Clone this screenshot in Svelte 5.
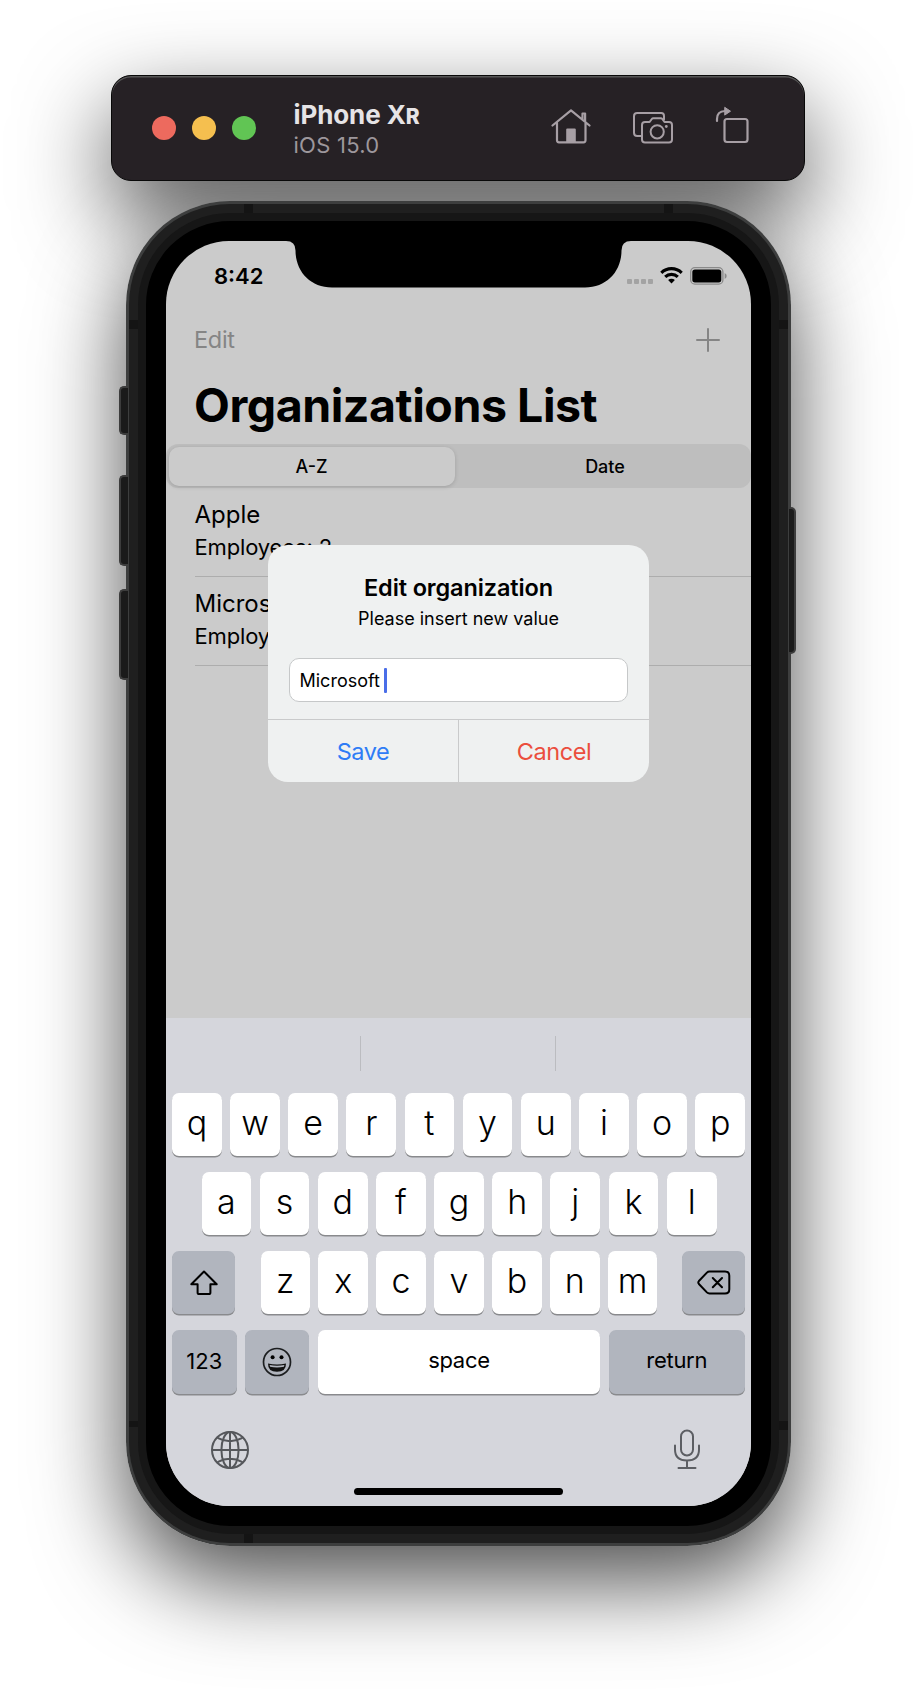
<script>
  const row1 = 'qwertyuiop'.split('');
  const row2 = 'asdfghjkl'.split('');
  const row3 = 'zxcvbnm'.split('');
  const orgs = [
    { name: 'Apple', count: 2 },
    { name: 'Microsoft', count: 3 }
  ];
</script>

<div class="stage">
  <header class="toolbar">
    <div class="lights"><i class="red"></i><i class="yellow"></i><i class="green"></i></div>
    <div class="names">
      <strong>iPhone X<small>R</small></strong>
      <span>iOS 15.0</span>
    </div>
    <div class="tools">
      <svg class="home" width="40" height="38" viewBox="0 0 40 38" fill="none" stroke="#a79fa5" stroke-width="2.2" stroke-linejoin="round" stroke-linecap="round">
        <path d="M1.500 17.500 20 2.300l18.500 15.200M6 15v17.300q0 2 2 2h24.500q2 0 2-2V15M31.500 11V5.500h2.600v8.500" />
        <path d="M16.300 34V21.500h7.400V34z" fill="#a79fa5" />
      </svg>
      <svg class="camera" width="40" height="32" viewBox="0 0 40 32" fill="none" stroke="#a79fa5" stroke-width="2" stroke-linejoin="round" stroke-linecap="round">
        <path d="M8 24H4.200Q1 24 1 20.800V4.200Q1 1 4.200 1h24Q31 1 31 4v3.500" />
        <path d="M12 10h4.600l2.200-3q.5-.7 1.500-.7h7.500q1 0 1.500.7l2.200 3H36q3 0 3 3v14.500q0 3-3 3H12q-3 0-3-3V13q0-3 3-3z" />
        <circle cx="24.200" cy="19.800" r="6.600" />
        <circle cx="33.300" cy="14.500" r="1.400" fill="#a79fa5" stroke="none" />
      </svg>
      <svg class="rotate" width="34" height="38" viewBox="0 0 34 38" fill="none" stroke="#a79fa5" stroke-width="2.200" stroke-linejoin="round" stroke-linecap="round">
        <rect x="9.500" y="13" width="23" height="23" rx="2.500" />
        <path d="M2 15v-2Q2 5.200 10 5" />
        <path d="M10 1.500 15.500 5.200 10 8.900z" fill="#a79fa5" stroke-width="1" />
      </svg>
    </div>
  </header>

  <div class="device">
    <i class="btn mute"></i><i class="btn up"></i><i class="btn down"></i><i class="btn power"></i>
    <i class="band b1"></i><i class="band b2"></i><i class="band b3"></i><i class="band b4"></i>
    <i class="band b5"></i><i class="band b6"></i><i class="band b7"></i>
    <div class="rim"><div class="bezel"><div class="screen">
      <svg class="notch" width="345" height="47" viewBox="0 0 345 47">
        <path d="M0 0Q9.500 0 9.500 9.500C9.500 30 24 46.500 46 46.500H299C321 46.500 335.500 30 335.500 9.500Q335.500 0 345 0z" fill="#000" />
      </svg>
      <div class="app">
        <div class="status">
          <b>8:42</b>
          <div class="signals">
            <div class="cells"><i></i><i></i><i></i><i></i></div>
            <svg width="23" height="17" viewBox="0 0 23 17" fill="none" stroke="#000" stroke-width="3.100">
              <path d="M1.300 5.800a14.600 14.600 0 0 1 20.400 0M5.200 9.900a9 9 0 0 1 12.600 0" />
              <path d="M11.500 16.500 8.100 13.100a4.900 4.900 0 0 1 6.800 0z" fill="#000" stroke="none" />
            </svg>
            <svg width="37" height="18" viewBox="0 0 37 18">
              <rect x=".7" y=".7" width="32.200" height="16.400" rx="4.200" fill="none" stroke="#8a8a8a" stroke-width="1.300" />
              <rect x="2.300" y="2.400" width="29" height="13" rx="2.600" />
              <path d="M34.700 6v6q2-.8 2-3t-2-3z" fill="#8a8a8a" />
            </svg>
          </div>
        </div>
        <nav>
          <span>Edit</span>
          <svg width="24" height="24" viewBox="0 0 24 24" stroke="#858585" stroke-width="2" stroke-linecap="round"><path d="M12 1v22M1 12h22" /></svg>
        </nav>
        <h1>Organizations List</h1>
        <div class="segments"><span class="on">A-Z</span><span class="off">Date</span></div>
        <ul>
          {#each orgs as org}
            <li><b>{org.name}</b><span>Employees: {org.count}</span></li>
          {/each}
        </ul>
      </div>

      <div class="keyboard">
        <div class="suggest"><i></i><i></i><i></i></div>
        <div class="row">{#each row1 as k}<span class="key">{k}</span>{/each}</div>
        <div class="row inset">{#each row2 as k}<span class="key">{k}</span>{/each}</div>
        <div class="row third">
          <span class="key dark side">
            <svg width="28" height="26" viewBox="0 0 28 26" fill="none" stroke="#000" stroke-width="2" stroke-linejoin="round"><path d="M14 1.500 26.700 14.300H20.400V22.500q0 1.600-1.600 1.600H9.200q-1.600 0-1.600-1.600V14.300H1.300z" /></svg>
          </span>
          <div class="mid">{#each row3 as k}<span class="key">{k}</span>{/each}</div>
          <span class="key dark side">
            <svg width="34" height="26" viewBox="0 0 34 26" fill="none" stroke="#000" stroke-width="2" stroke-linejoin="round" stroke-linecap="round"><path d="M12.500 1.500H28q4.300 0 4.300 4.300v13.400q0 4.300-4.300 4.300H12.500q-1.500 0-2.600-1.100L1.900 14q-1.200-1.500 0-3L9.900 2.600q1.100-1.100 2.600-1.100zM15.800 8l9.200 9.200M25 8l-9.200 9.200" /></svg>
          </span>
        </div>
        <div class="row fourth">
          <span class="key dark num">123</span>
          <span class="key dark emoji">
            <svg width="30" height="30" viewBox="0 0 30 30"><circle cx="15" cy="15" r="13.500" fill="none" stroke="#1c1e20" stroke-width="1.700" /><circle cx="10.600" cy="10.300" r="2" /><circle cx="19.500" cy="10.300" r="2" /><path d="M6 16.500q9 2.200 18 0 .2 8.300-9 8.300t-9-8.300z" fill="#111" /><path d="M7.600 18q7.400 1.600 14.800 0l-.5 1.700q-6.900 1.400-13.800 0z" fill="#b2b6bf" /></svg>
          </span>
          <span class="key word space">space</span>
          <span class="key dark word return">return</span>
        </div>
        <div class="foot">
          <svg width="38" height="38" viewBox="0 0 38 38" fill="none" stroke="#55575b" stroke-width="2">
            <circle cx="19" cy="19" r="18" /><ellipse cx="19" cy="19" rx="8.600" ry="18" /><path d="M19 1v36M1 19h36M6.500 6.800Q19 13.500 31.500 6.800M6.500 31.200Q19 24.500 31.500 31.200" />
          </svg>
          <svg class="mic" width="28" height="41" viewBox="0 0 28 41" fill="none" stroke="#5c5e63" stroke-width="2" stroke-linecap="round">
            <rect x="8" y="1.500" width="12" height="25" rx="6" /><path d="M2 16.500v4Q2 31.500 14 31.500T26 20.500v-4M14 31.500V39M5.500 39h17" />
          </svg>
        </div>
        <div class="homebar"></div>
      </div>

      <section class="alert">
        <div class="alert-body">
          <h2>Edit organization</h2>
          <p>Please insert new value</p>
          <div class="field"><span>Microsoft</span><i></i></div>
        </div>
        <div class="actions"><span class="save">Save</span><span class="cancel">Cancel</span></div>
      </section>
    </div></div></div>
  </div>
</div>

<style>
  :global(body) { background: #fff; }
  .stage {
    isolation: isolate;
    width: 916px; height: 1696px; box-sizing: border-box; padding-top: 75px; overflow: hidden;
    font-family: Inter, "Liberation Sans", sans-serif; color: #000; background: #fff;
  }
  .toolbar {
    box-sizing: border-box; width: 694px; height: 106px; margin-left: 111px; padding: 0 55px 0 40px;
    display: flex; align-items: center; background: #262125; border: 1px solid #080808; border-radius: 20px;
    box-shadow: inset 0 1.500px 0 #565656, 0 35px 90px rgba(0,0,0,.68);
  }
  .lights { display: flex; gap: 16px; }
  .lights i { width: 24px; height: 24px; border-radius: 50%; }
  .red { background: #ed6a5e; }
  .yellow { background: #f5bf4f; }
  .green { background: #61c554; }
  .names { margin-left: 37.500px; padding-top: 2px; display: flex; flex-direction: column; }
  .names strong { font-size: 26px; line-height: 30px; font-weight: 750; color: #e6e4e6; letter-spacing: -.1px; }
  .names small { font-size: 21px; font-weight: 800; }
  .names span { font-size: 22px; line-height: 27px; color: #9d979c; letter-spacing: .25px; }
  .tools { margin-left: auto; display: flex; align-items: center; }
  .home { margin-top: -2px; }
  .camera { margin-left: 42px; margin-top: -1px; }
  .rotate { margin-left: 42px; margin-top: -6px; }

  .device {
    position: relative; box-sizing: border-box; width: 665px; height: 1345px; margin: 20px 0 0 126px; padding: 3px;
    border-radius: 104px; background: #3d3e3e;
  }
  .device::before {
    content: ""; position: absolute; inset: 0; z-index: -1; border-radius: 104px;
    box-shadow: 0 35px 90px rgba(0,0,0,.7);
  }
  .rim { box-sizing: border-box; height: 100%; padding: 9px; background: #1f1f1f; border-radius: 101px; }
  .bezel { box-sizing: border-box; height: 100%; border: 8px solid #161616; background: #000; border-radius: 92px; padding: 20px; }
  .screen {
    position: relative; box-sizing: border-box; width: 585px; height: 1265px; background: #cbcbcb; border-radius: 63px;
    overflow: hidden; display: flex; flex-direction: column;
  }
  .btn { position: absolute; left: -7px; width: 9px; background: #1a1a1a; border: 2px solid #3c3c3c; border-right: 0; border-radius: 5px 0 0 5px; box-sizing: border-box; }
  .mute { top: 185px; height: 49px; }
  .up { top: 274px; height: 91px; }
  .down { top: 388px; height: 91px; }
  .power { left: auto; right: -5px; width: 7px; top: 306px; height: 147px; border: 2px solid #3c3c3c; border-left: 0; border-radius: 0 5px 5px 0; }
  .band { position: absolute; width: 9px; height: 9px; background: #141414; }
  .b1 { left: 118px; top: 3px; } .b2 { right: 118px; top: 3px; }
  .b3 { left: 3px; top: 119px; } .b4 { right: 3px; top: 119px; }
  .b5 { left: 3px; bottom: 119px; height: 6px; } .b6 { right: 3px; bottom: 116px; }
  .b7 { left: 118px; bottom: 3px; }
  .notch { position: absolute; left: 120px; top: 0; }

  .app { height: 776.500px; flex: none; }
  .status { height: 70px; display: flex; justify-content: space-between; padding: 0 24px 0 48px; }
  .status b { font-size: 22px; line-height: 26px; margin-top: 22px; font-weight: 600; }
  .signals { display: flex; gap: 7px; height: 18px; margin-top: 26px; align-items: flex-start; }
  .cells { display: flex; gap: 2px; margin-top: 12px; }
  .cells i { width: 5px; height: 5px; background: #a3a3a3; border-radius: 1px; }
  nav { height: 59px; display: flex; align-items: center; justify-content: space-between; padding: 0 31.500px 2px 28px; box-sizing: border-box; }
  nav span { font-size: 23.500px; color: #858585; letter-spacing: -.3px; }
  h1 { margin: 0; padding-left: 28px; height: 74px; line-height: 70px; font-size: 46.500px; font-weight: 700; letter-spacing: -.45px; }
  .segments { height: 44px; display: flex; background: #bebebe; border-radius: 12px; padding: 2.500px; box-sizing: border-box; font-size: 18px; font-weight: 500; }
  .segments span { flex: 1; display: flex; align-items: center; justify-content: center; }
  .segments .on { background: #cbcbcb; border-radius: 10px; box-shadow: 0 1px 4px rgba(0,0,0,.16); flex: 0 0 286px; }
  .segments .off { padding-left: 7px; }
  ul { list-style: none; margin: 0; padding: 0 0 0 28.500px; }
  li { height: 89px; box-sizing: border-box; border-bottom: 1px solid #adadad; display: flex; flex-direction: column; padding-top: 11px; }
  li b { font-weight: 400; font-size: 24px; line-height: 32px; }
  li span { font-size: 22px; line-height: 32px; letter-spacing: -.15px; }

  .keyboard { height: 488.500px; flex: none; background: #d5d6dc; display: flex; flex-direction: column; padding: 0 6px; box-sizing: border-box; }
  .suggest { height: 75px; flex: none; margin: 0 -6px; padding: 0 1px 3px 0; display: flex; align-items: center; box-sizing: border-box; }
  .suggest i { flex: 1; height: 35px; }
  .suggest i + i { border-left: 1px solid #bbbcc0; }
  .row { height: 79.200px; flex: none; display: flex; gap: 8.400px; align-items: flex-start; }
  .inset { padding: 0 28.500px 0 29.500px; }
  .key {
    flex: 1; height: 63.500px; border-radius: 7px; background: #fff; box-shadow: 0 1.500px 0 #898a8d;
    display: flex; justify-content: center; font-size: 34px; line-height: 59px; font-weight: 350;
  }
  .third { justify-content: space-between; }
  .mid { width: 397px; padding-left: 1px; display: flex; gap: 8.400px; }
  .dark { background: #b1b5be; }
  .side { flex: 0 0 63px; align-items: center; }
  .num { flex: 0 0 64.500px; font-size: 22px; font-weight: 400; line-height: 63px; }
  .emoji { flex: 0 0 64.500px; align-items: center; }
  .word { font-size: 22px; font-weight: 400; line-height: 61px; letter-spacing: -.3px; }
  .return { flex: 0 0 136.500px; }
  .foot { display: flex; flex: none; justify-content: space-between; align-items: flex-start; padding: 21.500px 44px 0 39px; height: 60px; box-sizing: border-box; }
  .foot svg { flex: none; }
  .mic { margin-top: -2px; }
  .homebar { width: 209px; height: 7.500px; flex: none; border-radius: 4px; background: #000; margin: 18.500px auto 0; }

  .alert { position: absolute; left: 102px; top: 304px; width: 381px; height: 237px; border-radius: 20px; background: #eff1f1; overflow: hidden; text-align: center; display: flex; flex-direction: column; }
  .alert-body { height: 175px; box-sizing: border-box; padding: 28px 21px 0; border-bottom: 1px solid #c9cacb; }
  h2 { margin: 0; font-size: 23.500px; line-height: 30px; font-weight: 600; letter-spacing: -.12px; }
  p { margin: 0; font-size: 18px; line-height: 31px; }
  .field { margin-top: 24px; height: 44px; box-sizing: border-box; border: 1px solid #c6c8c9; border-radius: 10px; background: #fff; display: flex; align-items: center; padding-left: 9.500px; font-size: 18px; }
  .field i { width: 3px; height: 25px; margin-left: 4.500px; background: #4a6ee8; border-radius: 1px; }
  .actions { flex: 1; display: flex; font-size: 23.500px; letter-spacing: -.45px; }
  .actions span { flex: 1; display: flex; align-items: center; justify-content: center; }
  .save { color: #2e7cf6; }
  .cancel { color: #eb4e3d; border-left: 1px solid #c9cacb; }
</style>
